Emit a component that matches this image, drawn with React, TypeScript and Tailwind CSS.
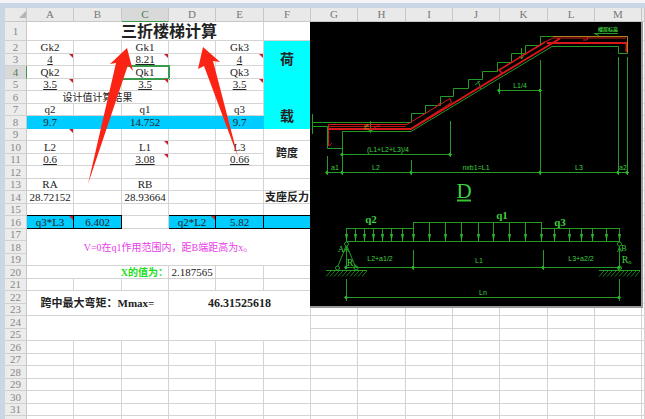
import type { ReactNode } from 'react';
import clsx from 'clsx';

interface Cell {
  text?: string;
  colSpan?: number;
  rowSpan?: number;
  className?: string;
  note?: boolean;
}

const COLUMNS = ['A', 'B', 'C', 'D', 'E', 'F', 'G', 'H', 'I', 'J', 'K', 'L', 'M', ''];
const WIDE = ['B', 'E', 'H', 'K'];
const LAST_ROW = 31;
const ROWS = Array.from({ length: LAST_ROW + 1 }, (_, i) => i + 1);

const BLUE = 'bg-[#00ccff] border-[#00ccff]';
const BOXED = 'bg-[#00ccff] border-black shadow-[0_-1px_0_#000]';

const CELLS: Record<string, Cell> = {
  A1: { text: '三折楼梯计算', colSpan: 5, className: 'text-base leading-[16px] font-bold pt-[2px] pl-12' },
  A2: { text: 'Gk2' },
  C2: { text: 'Gk1' },
  E2: { text: 'Gk3' },
  F2: { text: '荷', rowSpan: 3, className: 'bg-[#00ffff] border-[#00ffff] text-sm font-bold' },
  A3: { text: '4', className: 'underline', note: true },
  C3: { text: '8.21', className: 'underline', note: true },
  E3: { text: '4', className: 'underline', note: true },
  A4: { text: 'Qk2' },
  C4: { text: 'Qk1', className: 'outline-2 -outline-offset-1 outline-[#3c9a4c]' },
  E4: { text: 'Qk3' },
  A5: { text: '3.5', className: 'underline', note: true },
  C5: { text: '3.5', className: 'underline', note: true },
  E5: { text: '3.5', className: 'underline', note: true },
  F5: { rowSpan: 2, className: 'bg-[#00ffff] border-[#00ffff]' },
  A6: { text: '设计值计算结果', colSpan: 3, className: 'text-[10px]' },
  A7: { text: 'q2' },
  C7: { text: 'q1' },
  E7: { text: 'q3' },
  F7: { text: '载', rowSpan: 2, className: 'bg-[#00ffff] border-[#00ffff] text-sm font-bold' },
  A8: { text: '9.7', className: BLUE },
  B8: { className: BLUE },
  C8: { text: '14.752', className: BLUE },
  D8: { className: BLUE },
  E8: { text: '9.7', className: BLUE },
  A9: { note: true },
  A10: { text: 'L2' },
  C10: { text: 'L1', note: true },
  E10: { text: 'L3' },
  F10: { text: '跨度', rowSpan: 2, className: 'font-bold' },
  A11: { text: '0.6', className: 'underline' },
  C11: { text: '3.08', className: 'underline', note: true },
  E11: { text: '0.66', className: 'underline' },
  A13: { text: 'RA' },
  C13: { text: 'RB' },
  A14: { text: '28.72152' },
  C14: { text: '28.93664' },
  F14: { text: '支座反力', className: 'font-bold' },
  A16: { text: 'q3*L3', className: BOXED, note: true },
  B16: { text: '6.402', className: BOXED },
  D16: { text: 'q2*L2', className: BOXED, note: true },
  E16: { text: '5.82', className: BOXED },
  F16: { className: BOXED },
  A17: { text: 'V=0在q1作用范围内，距B端距高为x。', colSpan: 6, rowSpan: 3, className: 'text-[10px] text-[#e83ce8]' },
  A20: { text: 'X的值为：', colSpan: 3, className: 'text-[10px] font-bold text-[#22dd22] text-right' },
  D20: { text: '2.187565' },
  A22: { text: '跨中最大弯矩：Mmax=', colSpan: 3, rowSpan: 2, className: 'font-bold' },
  D22: { text: '46.31525618', colSpan: 3, rowSpan: 2, className: 'text-xs font-bold' },
  A24: { colSpan: 3, rowSpan: 2 },
  D24: { colSpan: 3, rowSpan: 2 },
};

// cells swallowed by a merged neighbour
const covered = new Set<string>();
Object.entries(CELLS).forEach(([key, { colSpan = 1, rowSpan = 1 }]) => {
  const col = COLUMNS.indexOf(key[0]);
  const row = Number(key.slice(1));
  for (let r = 0; r < rowSpan; r++) {
    for (let c = 0; c < colSpan; c++) {
      if (r || c) covered.add(COLUMNS[col + c] + (row + r));
    }
  }
});

function rowHeight(row: number) {
  if (row === 1) return 'h-[19px]';
  return row % 2 ? 'h-[12px]' : 'h-[13px]';
}

function SheetCell({ cell = {} }: { cell?: Cell }) {
  return (
    <td
      colSpan={cell.colSpan}
      rowSpan={cell.rowSpan}
      className={clsx(
        'relative border-r border-b text-center align-middle whitespace-nowrap',
        !cell.className?.includes('border-') && 'border-[#d4d4d4]',
        !cell.className?.includes('leading-') && 'leading-[11px]',
        cell.className,
      )}
    >
      {cell.text}
      {cell.note && (
        <span className="absolute top-0 right-0 border-t-4 border-l-4 border-t-[#c8202c] border-l-transparent" />
      )}
    </td>
  );
}

function Sheet() {
  return (
    <table className="w-full table-fixed border-separate border-spacing-0 bg-white text-[11px] text-[#222]">
      <colgroup>
        <col className="w-[22px]" />
        {COLUMNS.map((name) => (
          <col key={name} className={!name ? '' : WIDE.includes(name) ? 'w-[48px]' : 'w-[47px]'} />
        ))}
      </colgroup>
      <thead>
        <tr className="h-[14px] bg-[#e9e9e9] leading-[13px] text-[#777]">
          <th className="border-r border-b border-[#c8c8c8] p-0" aria-label="Select all">
            <span className="ml-auto block size-0 border-b-[7px] border-l-[7px] border-b-[#b4b4b4] border-l-transparent" />
          </th>
          {COLUMNS.map((name) => (
            <th
              key={name}
              className={clsx(
                'border-r border-b border-r-[#c8c8c8] p-0 font-normal',
                name === 'C' ? 'border-b-[#3c9a4c] bg-[#d9d9d9] text-[#4b7a55]' : 'border-b-[#c8c8c8]',
              )}
            >
              {name}
            </th>
          ))}
        </tr>
      </thead>
      <tbody>
        {ROWS.map((row) => (
          <tr key={row} className={rowHeight(row)}>
            <th
              className={clsx(
                'border-r border-b border-b-[#d0d0d0] p-0 leading-[11px] font-normal',
                row === 4
                  ? 'border-r-[#3c9a4c] bg-[#d9d9d9] text-[#4b7a55]'
                  : 'border-r-[#c8c8c8] bg-[#ececec] text-[#888]',
              )}
            >
              {row <= LAST_ROW && row}
            </th>
            {COLUMNS.map((name) =>
              covered.has(name + row) ? null : <SheetCell key={name} cell={CELLS[name + row]} />,
            )}
          </tr>
        ))}
      </tbody>
    </table>
  );
}

function Label({ x, y, size = 7, children }: { x: number; y: number; size?: number; children: ReactNode }) {
  return (
    <text x={x} y={y} fontSize={size} textAnchor="middle" fill="#3fd03f" stroke="none">
      {children}
    </text>
  );
}

function LoadArrows({ xs, top }: { xs: number[]; top: number }) {
  return (
    <>
      {xs.map((x) => (
        <g key={x}>
          <path d={`M${x} ${top}V241`} />
          <path d={`M${x - 1.5} 234h3l-1.5 7z`} fill="#2fb52f" stroke="none" />
        </g>
      ))}
    </>
  );
}

function Ticks({ points }: { points: [number, number][] }) {
  return (
    <>
      {points.map(([x, y]) => (
        <path key={`${x}-${y}`} d={`M${x - 2} ${y}l2 -2l2 2l-2 2z`} fill="#2fb52f" stroke="none" />
      ))}
    </>
  );
}

function Ground({ x }: { x: number }) {
  return (
    <>
      <path d={`M${x} 270.5h41`} />
      {Array.from({ length: 10 }, (_, i) => (
        <path key={i} d={`M${x + i * 4 + 5} 271l-5 5.5`} strokeWidth="0.8" />
      ))}
    </>
  );
}

function StairDrawing() {
  return (
    <svg
      viewBox="310 22 331 284"
      className="block h-[284px] w-[331px] bg-black font-['Liberation_Sans','Noto_Sans_CJK_SC',sans-serif]"
      fill="none"
      stroke="#259a25"
      strokeWidth="1"
      role="img"
      aria-label="三折楼梯"
    >
      {/* concrete outline and steps */}
      <path d="M312.5 114V134M312 122.5H411.5V113.5H425.5V105.5H440.5V96.5H453.5V88.5H468.5V79.5H482.5V71.5H497.5V62.5H511.5V53.5H525.5V45.5H540.5V36.5H627.5V53.5H618.5V46.5H552L411 131.5H342.5V148.5H327.5V126.5H312" />
      <path d="M370.5 121V133M368.5 124.5h4M368.5 130.5h4M475 85l5 -4M478 81l3 8M521.5 48V59M519.5 56l2 3l2 -3" />
      {/* reinforcement */}
      <g stroke="#d81818">
        <path d="M328.5 146V124.5H407L450 98.5l1.5 4L411 128.5" />
        <path d="M329 129H411L560 38.5" strokeWidth="2" />
        <path d="M329 126.5h77M329 146l3 -3" strokeWidth="0.8" />
        <path d="M502 73l-3 -3L545 42" strokeWidth="1.5" />
        <path d="M545 42L553 38H626" />
        <path d="M547 43H626.5V52" strokeWidth="2" />
        <path d="M374 128l3 -2h3M435 108l5 -5M583 40h4l1 -3" />
      </g>
      <path d="M553 36.5H627.5V53" stroke="#a8841c" />
      <path d="M364 129l4 -5M364 126h5M365 129h4" stroke="#b89a20" strokeWidth="0.8" />

      {/* stair dimensions */}
      <path d="M341 154.5H452M450.5 121V157M326 172.5H629M327.5 156V175M342.5 132V175M411.5 160V175M540.5 60V175M618.5 57V175M627.5 57V175" />
      <path d="M498 90.5H542M499.5 83V94M594 33.5H618M594 33.5l5 2" />
      <Ticks points={[[342, 154.5], [450, 154.5], [327, 172.5], [342, 172.5], [411, 172.5], [540, 172.5], [618, 172.5], [627, 172.5], [499, 90.5], [540, 90.5]]} />
      <Label x={388} y={152}>(L1+L2+L3)/4</Label>
      <Label x={520} y={88}>L1/4</Label>
      <Label x={335} y={170}>a1</Label>
      <Label x={376} y={170}>L2</Label>
      <Label x={476} y={170}>nxb1=L1</Label>
      <Label x={579} y={170}>L3</Label>
      <Label x={623} y={170}>a2</Label>
      <g className="font-bold">
        <Label x={608} y={31} size={5}>楼层标高</Label>
      </g>

      {/* beam and loads */}
      <path d="M346 241.5H620M346.5 228.5H413.5M413.5 222.5H541.5V228.5H619.5" />
      <LoadArrows xs={[346.5, 355.5, 364.5, 373.5, 382.5, 391.5, 402.5]} top={228} />
      <LoadArrows xs={[413.5, 429.5, 445.5, 461.5, 478.5, 493.5, 509.5, 525.5, 541.5]} top={222} />
      <LoadArrows xs={[554.5, 569.5, 581.5, 592.5, 606.5, 619.5]} top={228} />
      <circle cx="346.5" cy="244" r="2" />
      <circle cx="337.5" cy="268" r="2" />
      <circle cx="356" cy="268" r="2" />
      <circle cx="619.5" cy="244" r="2" />
      <circle cx="619.5" cy="268" r="2" />
      <path d="M346 246l-8 20M347 246l8 20M346.5 246V268M619.5 246V266M344.5 252l2 -5l2 5M617.5 252l2 -5l2 5" />
      <Ground x={326} />
      <Ground x={599} />
      <path d="M346 267.5H619M413.5 250V270M543.5 250V270M346 297.5H620M346.5 279V301M619.5 279V301" />
      <Ticks points={[[346, 267.5], [413, 267.5], [543, 267.5], [619, 267.5], [346, 297.5], [619, 297.5]]} />
      <Label x={380} y={261}>L2+a1/2</Label>
      <Label x={479} y={263}>L1</Label>
      <Label x={581} y={261}>L3+a2/2</Label>
      <Label x={483} y={295}>Ln</Label>

      <g className="font-['Liberation_Serif',serif] font-bold">
        <Label x={371} y={223} size={11}>q2</Label>
        <Label x={502} y={219} size={11}>q1</Label>
        <Label x={560} y={226} size={11}>q3</Label>
      </g>
      <g className="font-['Liberation_Serif',serif]">
        <Label x={341} y={252} size={9}>A</Label>
        <Label x={624} y={251} size={8}>B</Label>
        <Label x={350} y={266} size={10}>R</Label>
        <Label x={355} y={267} size={5}>A</Label>
        <Label x={625} y={263} size={10}>R</Label>
        <Label x={630} y={264} size={5}>B</Label>
        <Label x={464} y={198} size={21}>D</Label>
      </g>
      <path d="M457 200.5H471" stroke="#35c435" strokeWidth="2" />
    </svg>
  );
}

function Arrows() {
  return (
    <svg viewBox="0 0 160 145" className="h-[145px] w-[160px]" fill="#fb2414" aria-hidden="true">
      <path d="M47 5L30 21L36 20L8 141L48 22L53 28Z" />
      <path d="M123 4L118 26L124 23L158 114L133 18L140 19Z" />
    </svg>
  );
}

export default function App() {
  return (
    <main className="h-screen overflow-hidden bg-[#c9d6e4] font-['Liberation_Serif','Noto_Sans_CJK_SC',serif]">
      <div className="h-[3px] bg-[#f4f4f8]" />
      <div className="relative mt-[5px] ml-[5px]">
        <Sheet />
        <div className="absolute top-[14px] left-[305px] border-r-2 border-b-2 border-[#999]">
          <StairDrawing />
        </div>
        <div className="pointer-events-none absolute top-[35px] left-[75px]">
          <Arrows />
        </div>
      </div>
    </main>
  );
}
